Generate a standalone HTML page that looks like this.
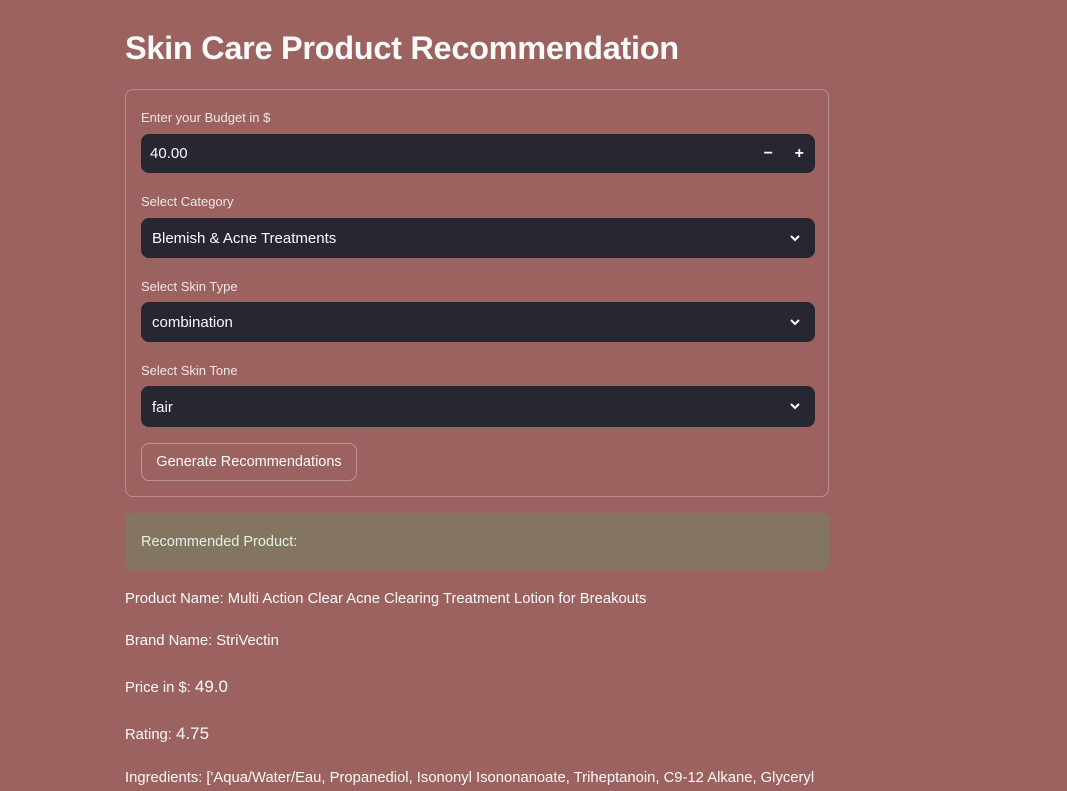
<!DOCTYPE html>
<html><head><meta charset="utf-8"><style>
*{box-sizing:border-box;margin:0;padding:0}
body{width:1067px;height:791px;overflow:hidden;background:#9b6260;font-family:"Liberation Sans",sans-serif;color:#fafafa;position:relative}
.a{position:absolute}
h1{position:absolute;left:125px;top:30px;font-size:32.5px;font-weight:bold;letter-spacing:-0.3px;color:#fafafa}
.form{left:125px;top:89px;width:704px;height:408px;border:1px solid rgba(250,250,250,0.3);border-radius:8px}
.lbl{font-size:13px;left:141px;color:#f0e6e6}
.inp{left:141px;width:674px;height:40px;background:#262730;border-radius:8px;font-size:15px;line-height:42px;padding-left:11px}
.chev{position:absolute;right:14px;top:14px}
.btn{left:141px;top:443px;width:216px;height:38px;border:1px solid rgba(250,250,250,0.35);border-radius:8px;font-size:14.5px;line-height:36px;text-align:center}
.alert{left:125px;top:513px;width:704px;height:57px;background:#847462;border-radius:6px;color:#dff3e4;font-size:14.5px;line-height:59px;padding-left:16px}
.t{left:125px;font-size:14.8px;white-space:nowrap}
.big{font-size:17px}
</style></head><body>
<h1>Skin Care Product Recommendation</h1>
<div class="a form"></div>
<div class="a lbl" style="top:110px">Enter your Budget in $</div>
<div class="a inp" style="top:134px;height:39px;line-height:40px;padding-left:9px">40.00
<span style="position:absolute;right:42px;top:0;font-size:16px;font-weight:bold">−</span>
<span style="position:absolute;right:11px;top:0;font-size:16px;font-weight:bold">+</span></div>
<div class="a lbl" style="top:194px">Select Category</div>
<div class="a inp" style="top:218px">Blemish &amp; Acne Treatments<svg class="chev" width="12" height="12" viewBox="0 0 12 12"><path d="M2 4l4 4 4-4" stroke="#fafafa" stroke-width="2" fill="none"/></svg></div>
<div class="a lbl" style="top:279px">Select Skin Type</div>
<div class="a inp" style="top:302px">combination<svg class="chev" width="12" height="12" viewBox="0 0 12 12"><path d="M2 4l4 4 4-4" stroke="#fafafa" stroke-width="2" fill="none"/></svg></div>
<div class="a lbl" style="top:363px">Select Skin Tone</div>
<div class="a inp" style="top:386px;height:41px;line-height:43px">fair<svg class="chev" width="12" height="12" viewBox="0 0 12 12"><path d="M2 4l4 4 4-4" stroke="#fafafa" stroke-width="2" fill="none"/></svg></div>
<div class="a btn">Generate Recommendations</div>
<div class="a alert">Recommended Product:</div>
<div class="a t" style="top:591px">Product Name: Multi Action Clear Acne Clearing Treatment Lotion for Breakouts</div>
<div class="a t" style="top:633px">Brand Name: StriVectin</div>
<div class="a t" style="top:677px">Price in $: <span class="big">49.0</span></div>
<div class="a t" style="top:724px">Rating: <span class="big">4.75</span></div>
<div class="a t" style="top:770px;width:700px;overflow:hidden">Ingredients: ['Aqua/Water/Eau, Propanediol, Isononyl Isononanoate, Triheptanoin, C9-12 Alkane, Glyceryl</div>
</body></html>
